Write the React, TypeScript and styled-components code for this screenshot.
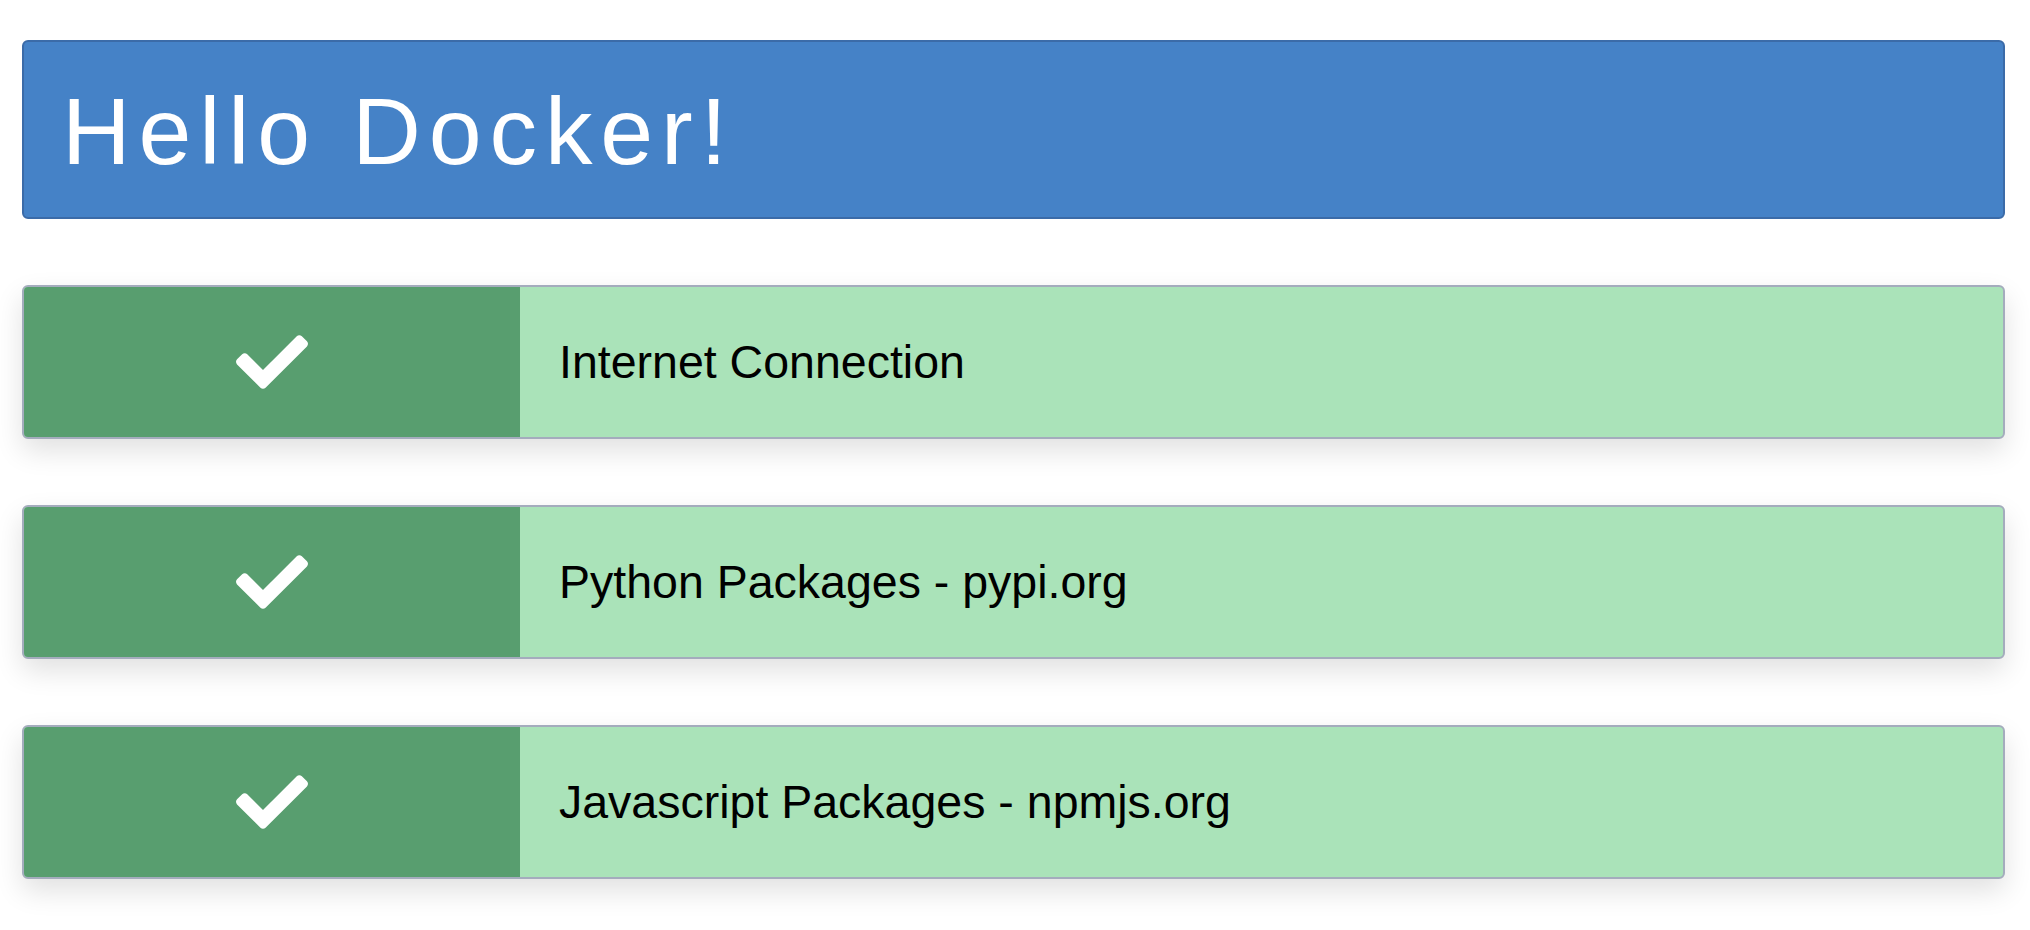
import React from "react";
import styled, { createGlobalStyle } from "styled-components";
import { FaCheck } from "react-icons/fa";

const Global = createGlobalStyle`
  html, body { margin: 0; padding: 0; background: #ffffff; }
  body { font-family: "Liberation Sans", Arial, Helvetica, sans-serif; }
`;

const Page = styled.div`
  display: flex;
  flex-direction: column;
  gap: 66px;
  padding: 40px 25px 50px 22px;
`;

const Header = styled.header`
  box-sizing: border-box;
  height: 179px;
  display: flex;
  align-items: center;
  padding-left: 38px;
  background: #4582c7;
  border: 2px solid #3b6ba8;
  border-radius: 6px;
`;

const Title = styled.h1`
  margin: 0;
  font-family: "Liberation Sans", Arial, sans-serif;
  font-weight: 400;
  font-size: 95px;
  letter-spacing: 7.9px;
  color: #ffffff;
  line-height: 1;
  transform: translateY(2px);
`;

const Row = styled.div`
  box-sizing: border-box;
  height: 154px;
  display: flex;
  border: 2px solid #a4acbd;
  border-radius: 6px;
  overflow: hidden;
  background: #aae3b9;
  box-shadow: 0 12px 28px rgba(0, 0, 0, 0.12);
`;

const IconCell = styled.div<{ $ok: boolean }>`
  flex: 0 0 496px;
  display: flex;
  align-items: center;
  justify-content: center;
  background: ${(p) => (p.$ok ? "#589e6f" : "#b55454")};
  color: #ffffff;
`;

const Label = styled.div`
  flex: 1;
  display: flex;
  align-items: center;
  padding-left: 39px;
  font-family: "Liberation Sans", Arial, sans-serif;
  font-size: 46.5px;
  color: #000000;
`;

const checks = [
  "Internet Connection",
  "Python Packages - pypi.org",
  "Javascript Packages - npmjs.org",
];

export default function App() {
  return (
    <>
      <Global />
      <Page>
        <Header>
          <Title>Hello Docker!</Title>
        </Header>
        {checks.map((c) => (
          <Row key={c}>
            <IconCell $ok>
              <FaCheck size={72} />
            </IconCell>
            <Label>{c}</Label>
          </Row>
        ))}
      </Page>
    </>
  );
}
